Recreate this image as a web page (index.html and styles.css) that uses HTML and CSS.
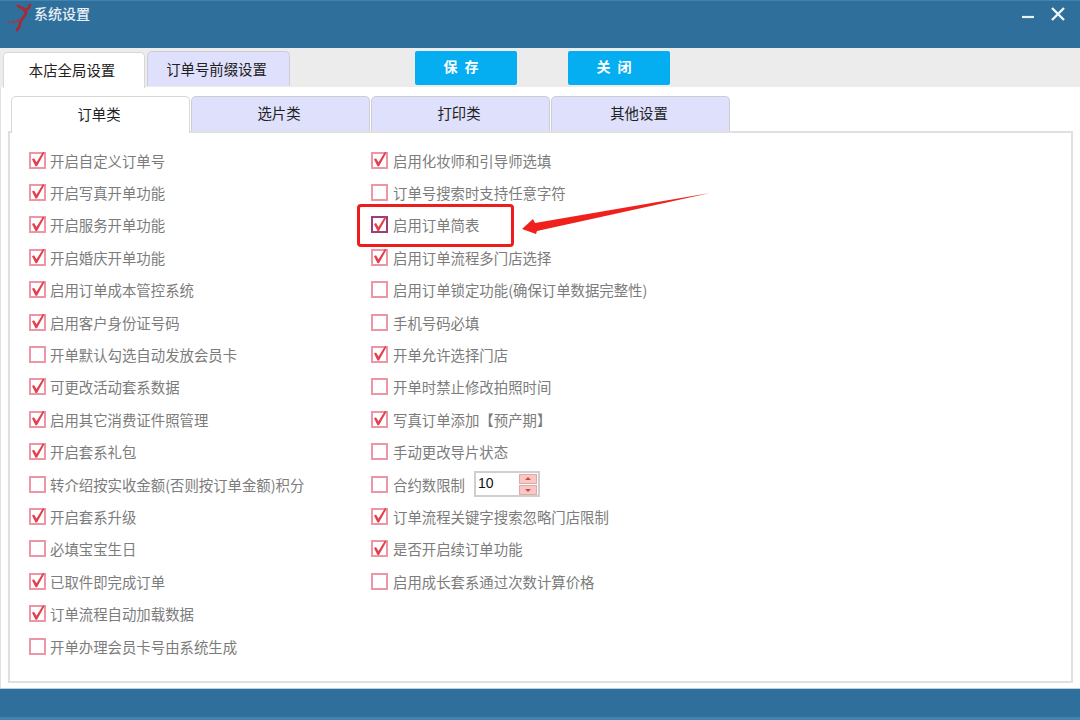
FILE: index.html
```html
<!DOCTYPE html>
<html lang="zh">
<head>
<meta charset="utf-8">
<title>系统设置</title>
<link rel="stylesheet" href="styles.css">
</head>
<body>
<div class="window">
  <header class="titlebar">
    <svg class="logo" width="32" height="30" viewBox="0 0 32 30"><path d="M14 3 L20 6 C24 9 21 13 18 16 C15 19 17 23 13 27 M26 2 C25 6 23 7 20 7" fill="none" stroke="#a92a33" stroke-width="2.8" stroke-linecap="round"/><path d="M15 17 C12 20 8 18 2 20" fill="none" stroke="#b5323a" stroke-width="1.8" stroke-dasharray="3 1.5"/></svg>
    <span class="title">系统设置</span>
    <svg class="winbtn min" width="14" height="14" viewBox="0 0 14 14"><path d="M1 9H13" stroke="#e8f2f8" stroke-width="2.2"/></svg>
    <svg class="winbtn close" width="16" height="16" viewBox="0 0 16 16"><path d="M2 2L14 14M14 2L2 14" stroke="#f2f7fa" stroke-width="2.4"/></svg>
  </header>

  <div class="toolbar">
    <div class="tab outer active">本店全局设置</div>
    <div class="tab outer second">订单号前缀设置</div>
    <button class="action save">保 存</button>
    <button class="action shut">关 闭</button>
  </div>

  <main class="sheet">
    <div class="innertabs">
      <div class="tab inner active">订单类</div>
      <div class="tab inner">选片类</div>
      <div class="tab inner">打印类</div>
      <div class="tab inner">其他设置</div>
    </div>
    <section class="panel">
      <div class="col first">
        <label class="opt"><i class="box on"></i>开启自定义订单号</label>
        <label class="opt"><i class="box on"></i>开启写真开单功能</label>
        <label class="opt"><i class="box on"></i>开启服务开单功能</label>
        <label class="opt"><i class="box on"></i>开启婚庆开单功能</label>
        <label class="opt"><i class="box on"></i>启用订单成本管控系统</label>
        <label class="opt"><i class="box on"></i>启用客户身份证号码</label>
        <label class="opt"><i class="box"></i>开单默认勾选自动发放会员卡</label>
        <label class="opt"><i class="box on"></i>可更改活动套系数据</label>
        <label class="opt"><i class="box on"></i>启用其它消费证件照管理</label>
        <label class="opt"><i class="box on"></i>开启套系礼包</label>
        <label class="opt"><i class="box"></i>转介绍按实收金额(否则按订单金额)积分</label>
        <label class="opt"><i class="box on"></i>开启套系升级</label>
        <label class="opt"><i class="box"></i>必填宝宝生日</label>
        <label class="opt"><i class="box on"></i>已取件即完成订单</label>
        <label class="opt"><i class="box on"></i>订单流程自动加载数据</label>
        <label class="opt"><i class="box"></i>开单办理会员卡号由系统生成</label>
      </div>
      <div class="col second-col">
        <label class="opt"><i class="box on"></i>启用化妆师和引导师选填</label>
        <label class="opt"><i class="box"></i>订单号搜索时支持任意字符</label>
        <label class="opt"><i class="box on focus"></i>启用订单简表</label>
        <label class="opt"><i class="box on"></i>启用订单流程多门店选择</label>
        <label class="opt"><i class="box"></i>启用订单锁定功能(确保订单数据完整性)</label>
        <label class="opt"><i class="box"></i>手机号码必填</label>
        <label class="opt"><i class="box on"></i>开单允许选择门店</label>
        <label class="opt"><i class="box"></i>开单时禁止修改拍照时间</label>
        <label class="opt"><i class="box on"></i>写真订单添加【预产期】</label>
        <label class="opt"><i class="box"></i>手动更改导片状态</label>
        <label class="opt"><i class="box"></i>合约数限制
          <span class="spin"><span class="spinval">10</span><span class="spinbtns"><b class="up"></b><b class="down"></b></span></span>
        </label>
        <label class="opt"><i class="box on"></i>订单流程关键字搜索忽略门店限制</label>
        <label class="opt"><i class="box on"></i>是否开启续订单功能</label>
        <label class="opt"><i class="box"></i>启用成长套系通过次数计算价格</label>
      </div>
    </section>
  </main>
  <footer class="statusbar"></footer>

  <div class="callout"></div>
  <svg class="arrow" width="190" height="50" viewBox="0 0 190 50"><path d="M0 37 L11 27 L13 31 L188 1 L15 39 L14 42 Z" fill="#f0201c"/></svg>
</div>
</body>
</html>
```
FILE: styles.css
```css
* { box-sizing: border-box; }
html, body { margin: 0; padding: 0; }
body { width: 1080px; height: 720px; overflow: hidden; background: #ececec; font-family: "Noto Sans CJK SC", "Liberation Sans", sans-serif; }
.window { position: relative; width: 1080px; height: 720px; display: flex; flex-direction: column; background: #ececec; }

.titlebar { height: 48px; flex: none; display: flex; align-items: flex-start; background: #2f6f9c; border-top: 1px solid #3f83ae; padding: 2px 0 0 4px; }
.logo { flex: none; }
.title { color: #e9f1f6; font-size: 14px; line-height: 24px; margin: -2px 0 0 -2px; font-weight: 500; }
.winbtn { flex: none; margin-top: 5px; }
.min { margin-left: auto; margin-right: 15px; }
.close { margin-right: 14px; margin-top: 3px; }

.toolbar { height: 39px; flex: none; display: flex; align-items: flex-start; padding: 3px 0 0 3px; background: #ececec; }
.tab { display: flex; align-items: center; justify-content: center; color: #222; font-size: 14.4px; background: #dfe0fb; border: 1px solid #cdcdd6; border-bottom: 0; border-radius: 5px 5px 0 0; padding: 0 3px 3px 0; }
.tab.active { background: #fff; border-color: #d8d8d8; }
.outer { width: 143px; height: 36px; flex: none; padding: 0 4px 2px 0; }
.outer.active { margin-top: 1px; width: 142px; height: 36px; position: relative; z-index: 1; }
.second { margin-left: 2px; height: 35px; }
.action { flex: none; width: 102px; height: 34px; margin: 0; padding: 0 8px 4px 0; border: 0; border-radius: 2px; background: #05aef0; color: #fff; font: 700 14px "Noto Sans CJK SC", sans-serif; letter-spacing: 2px; }
.save { margin-left: 125px; }
.shut { margin-left: 51px; }

.sheet { flex: 1; display: flex; flex-direction: column; background: #fff; padding: 9px 7px 5px 7px; border-left: 1px solid #e2e2e2; }
.innertabs { display: flex; height: 35px; flex: none; gap: 1px; padding-left: 3px; }
.inner { width: 179px; height: 35px; }
.inner.active { position: relative; z-index: 1; height: 37px; margin-bottom: -2px; }
.panel { flex: 1; display: flex; border: 2px solid #e0e0e0; background: #fff; padding: 11px 0 0 19px; }
.col { display: flex; flex-direction: column; }
.first { width: 342px; }
.second-col .box { margin-right: 5px; }

.opt { height: 32.4px; display: flex; align-items: center; color: #7c7c7c; font-size: 14.4px; white-space: nowrap; flex: none; }
.box { position: relative; flex: none; width: 17px; height: 17px; margin-right: 4px; border: 2px solid #ee96a5; background: #fff; }
.box.on::after { content: ""; position: absolute; left: -2px; top: -2px; width: 18px; height: 17px; background: #e2404c; clip-path: polygon(3px 7.5px, 5px 6.5px, 7.5px 10.5px, 14px 0, 15.5px 1px, 8px 14.5px, 6.5px 14.5px); }
.box.focus { border-color: #9a3f78; }

.spin { display: inline-flex; align-items: center; justify-content: space-between; width: 66px; height: 26px; margin-left: 9px; background: #fff; border: 2px solid #cfcfcf; padding: 0 1px 0 2px; }
.spinval { color: #111; font-size: 14px; font-family: "Liberation Sans", sans-serif; margin-top: -2px; }
.spinbtns { display: flex; flex-direction: column; gap: 1px; }
.spinbtns b { position: relative; display: block; width: 18px; height: 10px; background: #f7c9c4; border: 1px solid #e3a9a4; }
.spinbtns b::after { content: ""; position: absolute; left: 5px; border-left: 3px solid transparent; border-right: 3px solid transparent; }
.up::after { top: 2px; border-bottom: 3px solid #d0464e; }
.down::after { top: 3px; border-top: 3px solid #d0464e; }

.statusbar { height: 32px; flex: none; background: #2f6f9c; border-top: 1px solid #bcd0dd; border-bottom: 3px solid #3f83ae; }

.callout { position: absolute; left: 357px; top: 204px; width: 157px; height: 43px; border: 3px solid #ee1c1c; border-radius: 4px; }
.arrow { position: absolute; left: 522px; top: 192px; }
```
